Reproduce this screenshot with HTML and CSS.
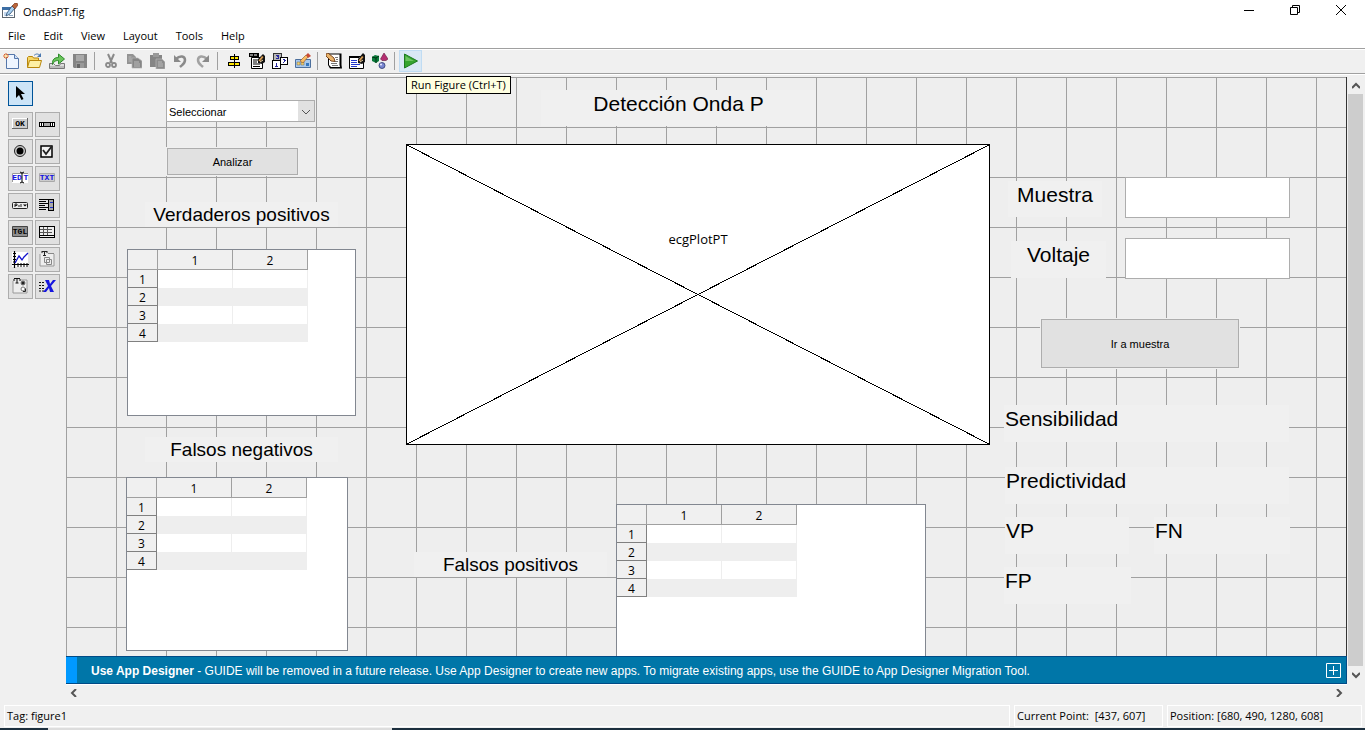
FILE: index.html
```html
<!DOCTYPE html>
<html lang="es">
<head>
<meta charset="utf-8">
<title>OndasPT.fig</title>
<link rel="stylesheet" href="styles.css">
</head>
<body>
<header class="titlebar">
  <svg class="app-icon" viewBox="0 0 16 16"><rect x=".5" y="4.500" width="12" height="10" fill="#fff" stroke="#5d6670"/><rect x="0" y="4" width="10" height="3" fill="#3c6ea5"/><path d="M2 9h3v4H2z" fill="#c4d8ee"/><path d="M7 12.500h4" stroke="#8ba6c0"/><path d="M5 10l5-7 3 2-5 6-4 2z" fill="#a8d0f0" stroke="#2a4a70" stroke-width=".8"/><path d="M10 3l3-3h2l1 2-3 4z" fill="#b9653a" stroke="#6b2c18" stroke-width=".6"/></svg>
  <h1 class="title">OndasPT.fig</h1>
  <div class="window-buttons">
    <button aria-label="Minimize"><svg viewBox="0 0 10 10"><path d="M0 5.500h10" stroke="#000"/></svg></button>
    <button aria-label="Restore"><svg viewBox="0 0 10 10"><path d="M.5 2.500h7v7h-7zM2.500 2.500V.5h7v7h-2" fill="none" stroke="#000"/></svg></button>
    <button aria-label="Close"><svg viewBox="0 0 10 10"><path d="M0 0l10 10M10 0L0 10" stroke="#000"/></svg></button>
  </div>
</header>
<nav class="menubar">
  <button>File</button><button>Edit</button><button>View</button><button>Layout</button><button>Tools</button><button>Help</button>
</nav>
<div class="toolbar" role="toolbar">
  <button aria-label="New"><svg viewBox="0 0 16 16"><path d="M3.500 1.500h8l4 4v10h-12z" fill="#eef5ff" stroke="#5577aa"/><path d="M11.500 1.500v4h4" fill="#cfe0f7" stroke="#5577aa"/><path d="M3 0v6M0 3h6M1 1l4 4M5 1L1 5" stroke="#e0672a"/><rect x="2" y="2" width="2" height="2" fill="#ffe9a0"/></svg></button>
  <button aria-label="Open"><svg viewBox="0 0 16 16"><path d="M1.500 14V4.500l1-1h4l1 1.500h5v9z" fill="#f6d667" stroke="#b8860b"/><path d="M1.500 14.500l2-7h12l-2 7z" fill="#fdf0a5" stroke="#b8860b"/><path d="M8 2.500c2-2 4-2 6 0" fill="none" stroke="#4a78b0"/><path d="M15 0v4h-4z" fill="#4a78b0"/></svg></button>
  <button aria-label="Import"><svg viewBox="0 0 16 16"><path d="M.5 10.500h4l2 2h4l1-2h4v5H.5z" fill="#ddd" stroke="#777"/><path d="M1 14h14" stroke="#999"/><path d="M3.500 11.500C3 6 6 4.500 9.500 4.500V1l6 5-6 5V7.500C7 7.500 5 8 3.500 11.500z" fill="#69c45a" stroke="#2d8a2a"/></svg></button>
  <button aria-label="Save"><svg viewBox="0 0 16 16"><path d="M1 1h14v14H2l-1-1z" fill="#858585"/><path d="M4 2h8v6H4z" fill="#aaa"/><path d="M4 10h8v5H4z" fill="#999"/><path d="M5 11h3v4H5z" fill="#666"/></svg></button>
  <span class="separator"></span>
  <button aria-label="Cut"><svg viewBox="0 0 16 16"><path d="M5 1l4 9M11 1L7 10" stroke="#8a8a8a" stroke-width="2"/><circle cx="5" cy="12" r="2" fill="none" stroke="#8a8a8a" stroke-width="1.800"/><circle cx="11" cy="12" r="2" fill="none" stroke="#8a8a8a" stroke-width="1.800"/></svg></button>
  <button aria-label="Copy"><svg viewBox="0 0 16 16"><path d="M1 1h6l3 3v7H1z" fill="#939393"/><path d="M6 5h6l4 3v7H6z" fill="#858585" stroke="#b8b8b8" stroke-width=".7"/><path d="M2.500 4h3M2.500 6h3M2.500 8h3M8 9h5M8 11h6M8 13h6" stroke="#bbb"/></svg></button>
  <button aria-label="Paste"><svg viewBox="0 0 16 16"><path d="M1 2h12v12H1z" fill="#858585"/><path d="M4 0h6v4H4z" fill="#9a9a9a"/><path d="M7 6h6l3 3v7H7z" fill="#8c8c8c" stroke="#b8b8b8" stroke-width=".7"/><path d="M9 9h4M9 11h5M9 13h5" stroke="#bbb"/></svg></button>
  <button aria-label="Undo"><svg viewBox="0 0 16 16"><path d="M4 6c4-4 9-3 9 1s-3 5-5 7" fill="none" stroke="#8a8a8a" stroke-width="2.500"/><path d="M2 2v7h7z" fill="#8a8a8a"/></svg></button>
  <button aria-label="Redo"><svg viewBox="0 0 16 16"><path d="M12 6C8 2 3 3 3 7s3 5 5 7" fill="none" stroke="#a2a2a2" stroke-width="2.500"/><path d="M14 2v7H7z" fill="#8a8a8a"/></svg></button>
  <span class="separator"></span>
  <button aria-label="Align Objects"><svg viewBox="0 0 16 16" class="crisp"><path d="M8 1h1v14H8z"/><path d="M4.500 3.500h8v3h-8zM2.500 9.500h11v3h-11z" fill="#ffe600" stroke="#000"/><path d="M8 4h1v2H8zM8 10h1v2H8z"/></svg></button>
  <button aria-label="Menu Editor"><svg viewBox="0 0 16 16"><path d="M0 0h10v4H0z"/><path d="M1 2h3M5 2h3" stroke="#fff"/><path d="M2.500 4.500h11v11h-11z" fill="#fff" stroke="#000"/><path d="M4 7h5M4 9h4M4 11h7M4 13.500h7" stroke="#000"/><path d="M9 10V6l5-5 2 2v6l-3 2z" fill="#111"/><path d="M9.500 7.500L13 3l1.500 1-3.500 4.500z" fill="#d79b50"/><path d="M11 9l3-2" stroke="#f3d7a8"/></svg></button>
  <button aria-label="Tab Order Editor"><svg viewBox="0 0 16 16" class="crisp"><path d="M1.500.5h8v7h-8z" fill="#b7b7b7" stroke="#333"/><path d="M8.500 4.500h7v7h-7zM.5 7.500h8v8h-8z" fill="#fff" stroke="#000"/><path d="M4 2h3v4H4V5h2V4H5V3h1H4M11 6h2v1h1v1h-1v1h-1v1h2H11V9h1V7h-1M4 10h1v3h1v1H3v-1h1v-2H3z" fill="#24249c"/></svg></button>
  <button aria-label="Toolbar Editor"><svg viewBox="0 0 16 16"><path d="M.5 6.500h15v8H.5z" fill="#a9c9ec" stroke="#4c6f9c"/><path d="M2 9h3v3H2zM6 9h3v3H6z" fill="#f3d26c" stroke="#666" stroke-width=".5"/><path d="M11 10h3v3h-3z" fill="#3577be"/><path d="M5 8l6-6 2 2-5 6z" fill="#f8bd64" stroke="#884d21" stroke-width=".6"/><path d="M11 2l2-2 3 3-3 2z" fill="#c84b34"/></svg></button>
  <span class="separator"></span>
  <button aria-label="Editor"><svg viewBox="0 0 16 16"><path d="M2 .5h13.500V12l.5 3.500H4L2 12z" fill="#000"/><path d="M3 1.500h10.500V12l.5 2H5l-2-2z" fill="#fff"/><path d="M5 10.500h6M6 12.500h6M9 8.500h3M9 4.500h3M10 6.500h2" stroke="#777"/><path d="M0 1l2-1 6 5 1 3.500L5 8 0 3z" fill="#e8b36a" stroke="#6b3411" stroke-width=".9"/></svg></button>
  <button aria-label="Property Inspector"><svg viewBox="0 0 16 16"><path d="M.5 3.500h14v12H.5z" fill="#fff" stroke="#000"/><path d="M0 3h10v2H0z"/><path d="M2 7.500h6M2 9.500h6M2 11.500h9M2 13.500h6" stroke="#2438cc"/><path d="M9 10V6l5-6 2 2v7l-3 2z" fill="#111"/><path d="M9.500 7.500L13 3l1.500 1-3.500 4.500z" fill="#d79b50"/><path d="M11 9l3-2" stroke="#f3d7a8"/></svg></button>
  <button aria-label="Object Browser"><svg viewBox="0 0 16 16"><path d="M0 4l3-2 4 1v5l-3 2-4-2z" fill="#0a7a3a"/><path d="M0 4l4 1 3-2M4 5v5" stroke="#031" fill="none"/><path d="M12 0l4 6-2 1.500h-4L8.500 6z" fill="#b52e70" stroke="#61183d" stroke-width=".6"/><circle cx="10" cy="12.500" r="3" fill="#7986d1" stroke="#29366f" stroke-width=".8"/><circle cx="9" cy="11.500" r="1" fill="#eef"/></svg></button>
  <span class="separator"></span>
  <button class="run" aria-label="Run Figure"><svg viewBox="0 0 16 16"><path d="M1.500 1L14.500 8l-13 7z" fill="#35a42e" stroke="#1d7b20"/><path d="M2.500 3L11 8H2.500z" fill="#6cc35f"/></svg>
    <span class="tooltip" role="tooltip">Run Figure (Ctrl+T)</span></button>
</div>
<main class="workspace">
  <aside class="palette">
    <button class="selected" aria-label="Select"><svg viewBox="0 0 19 19"><path d="M5 2v12l3-3 2.500 5 2-1-2.500-5h4z"/></svg></button>
    <div class="components">
      <button aria-label="Push Button"><svg viewBox="0 0 19 19"><path d="M1 3h16v11H1z" fill="#666"/><path d="M1 3h15v10H1z" fill="#fff"/><path d="M2 4h14v9H2z" fill="#ccc"/><text x="9" y="11" class="tiny">OK</text></svg></button>
      <button aria-label="Slider"><svg viewBox="0 0 19 19" class="crisp"><path d="M1 7h16v5H1z"/><path d="M2 8h3v3H2zM13 8h3v3h-3z" fill="#fff"/><path d="M6 8h6v3H6z" fill="#aaa"/><path d="M3 8h1v3H3zM14 8h1v3h-1z"/></svg></button>
      <button aria-label="Radio Button"><svg viewBox="0 0 19 19"><circle cx="9" cy="9" r="5.500" fill="#ccc" stroke="#222"/><circle cx="9" cy="9" r="3.500"/></svg></button>
      <button aria-label="Check Box"><svg viewBox="0 0 19 19"><path d="M3 4h11v11H3z" fill="#f4f4f4" stroke="#000" stroke-width="1.500"/><path d="M5 8l3 4 6-8" fill="none" stroke="#222" stroke-width="1.800"/></svg></button>
      <button aria-label="Edit Text"><svg viewBox="0 0 19 19"><path d="M1 4h16v10H1z" fill="#fff"/><path d="M1.500 13V4.500H17" stroke="#999" fill="none"/><text x="6" y="11" class="tiny blue">ED</text><text x="15" y="11" class="tiny blue">T</text><path d="M9 3l2 1 2-1M11 4v9M9 14l2-1 2 1" stroke="#000" fill="none"/></svg></button>
      <button aria-label="Static Text"><svg viewBox="0 0 19 19"><path d="M1.500 4.500h15v8h-15z" fill="#ccc" stroke="#aaa"/><text x="9" y="11" class="tiny blue">TXT</text></svg></button>
      <button aria-label="Pop-up Menu"><svg viewBox="0 0 19 19"><rect x="1.500" y="6.500" width="15" height="6" rx="1" fill="#eee" stroke="#222"/><path d="M4 11V8h2v1.500H4M7 10h2M10 8v3" fill="none" stroke="#222"/><path d="M12 8.500h4l-2 2z"/></svg></button>
      <button aria-label="Listbox"><svg viewBox="0 0 19 19" class="crisp"><path d="M1 3h9v1H1zM1 5h7v1H1zM1 7h9v1H1zM1 9h6v1H1zM1 11h9v1H1zM1 13h7v1H1z"/><path d="M10.500 3.500h5v11h-5z" fill="#aaa" stroke="#000"/><path d="M12 6h3v1h-3zM12 11h3v1h-3z" fill="#23c"/></svg></button>
      <button aria-label="Toggle Button"><svg viewBox="0 0 19 19"><path d="M1.500 3.500h15v10h-15z" fill="#8d8d8d" stroke="#444"/><text x="9" y="11" class="tiny">TGL</text></svg></button>
      <button aria-label="Table"><svg viewBox="0 0 19 19" class="crisp"><path d="M1.500 3.500h15v11h-15z" fill="#eee" stroke="#000"/><path d="M2 6h12v1H2zM2 9h12v1H2z" fill="#555"/><path d="M5 4h1v8H5zM9 4h1v8H9z" fill="#555"/><path d="M13 4h1v8H2v1h15v-1h-3V4z"/></svg></button>
      <button aria-label="Axes"><svg viewBox="0 0 19 19"><path d="M1 2h16v15H1z" fill="#fff"/><path d="M3.500 1v17M1 14.500h17" stroke="#000" stroke-width="1.200"/><path d="M2 3.500h3M2 6.500h3M2 9.500h3M2 12h3M7 13v4M10 13v4M13 13v4M16 13v4" stroke="#000"/><path d="M4 13l4-7 3 4 2-3 4-4" fill="none" stroke="#11c" stroke-width="1.300"/></svg></button>
      <button aria-label="Panel"><svg viewBox="0 0 19 19"><path d="M2 4v12h14V4" fill="#eee" stroke="#999"/><path d="M4 1.500h5M6.500 1v5M4 1v2M9 1v2M5 5.500h3" stroke="#222"/><path d="M6.500 7.500h5v5h-5zM8.500 9.500h5v5h-5zM10 3.500h6" fill="none" stroke="#888"/></svg></button>
      <button aria-label="Button Group"><svg viewBox="0 0 19 19"><path d="M2 4v12h14V3h-7" fill="#eee" stroke="#999"/><path d="M3 1.500h6M6 1v5M3 2v2M9 2v2M4.500 6h3" stroke="#111"/><circle cx="12" cy="6" r="2" fill="#222" stroke="#777"/><circle cx="12" cy="12" r="2" fill="#fff" stroke="#777"/><path d="M12 14.500h2.500v-3" fill="none" stroke="#222"/></svg></button>
      <button aria-label="ActiveX Control"><svg viewBox="0 0 19 19"><path d="M1 5.500h6M1 8.500h6M1 11.500h6M1 14h5" stroke="#111" stroke-dasharray="2 1"/><path d="M7 3h4l1 4 3-4h3l-5 6 3 6h-4l-1-4-3 4H5l5-6z" fill="#1515df"/></svg></button>
    </div>
  </aside>
  <section class="stage">
    <div class="canvas">
      <select class="widget popup" aria-label="Seleccionar"><option>Seleccionar</option></select>
      <svg class="widget chevron" viewBox="0 0 10 6"><path d="M1 1l4 4 4-4" fill="none" stroke="#555"/></svg>
      <button class="widget push analyze">Analizar</button>
      <div class="widget caption main-caption">Detección Onda P</div>
      <div class="widget axes"><svg viewBox="0 0 100 100" preserveAspectRatio="none"><path d="M0 0L100 100M100 0L0 100" stroke="#000" vector-effect="non-scaling-stroke" shape-rendering="crispEdges"/></svg><span>ecgPlotPT</span></div>
      <div class="widget caption list-caption true-positive">Verdaderos positivos</div>
      <div class="widget uitable table-tp"><table><thead><tr><th></th><th>1</th><th>2</th></tr></thead><tbody><tr><th>1</th><td></td><td></td></tr><tr><th>2</th><td></td><td></td></tr><tr><th>3</th><td></td><td></td></tr><tr><th>4</th><td></td><td></td></tr></tbody></table></div>
      <div class="widget caption list-caption false-negative">Falsos negativos</div>
      <div class="widget uitable table-fn"><table><thead><tr><th></th><th>1</th><th>2</th></tr></thead><tbody><tr><th>1</th><td></td><td></td></tr><tr><th>2</th><td></td><td></td></tr><tr><th>3</th><td></td><td></td></tr><tr><th>4</th><td></td><td></td></tr></tbody></table></div>
      <div class="widget caption list-caption false-positive">Falsos positivos</div>
      <div class="widget uitable table-fp"><table><thead><tr><th></th><th>1</th><th>2</th></tr></thead><tbody><tr><th>1</th><td></td><td></td></tr><tr><th>2</th><td></td><td></td></tr><tr><th>3</th><td></td><td></td></tr><tr><th>4</th><td></td><td></td></tr></tbody></table></div>
      <label class="widget caption sample-label" for="muestra">Muestra</label>
      <input class="widget edit sample-edit" id="muestra" type="text">
      <label class="widget caption voltage-label" for="voltaje">Voltaje</label>
      <input class="widget edit voltage-edit" id="voltaje" type="text">
      <button class="widget push go-sample">Ir a muestra</button>
      <div class="widget caption result sensitivity">Sensibilidad</div>
      <div class="widget caption result predictivity">Predictividad</div>
      <div class="widget caption result vp">VP</div>
      <div class="widget caption result fn">FN</div>
      <div class="widget caption result fp">FP</div>
    </div>
    <div class="banner">
      <p><b>Use App Designer</b> - GUIDE will be removed in a future release. Use App Designer to create new apps. To migrate existing apps, use the GUIDE to App Designer Migration Tool.</p>
      <button aria-label="Expand"><svg viewBox="0 0 15 15"><path d="M.5.5h14v14H.5zM7.500 3v9M3 7.500h9" fill="none" stroke="#fff"/></svg></button>
    </div>
    <div class="hscroll">
      <button aria-label="Scroll left"><svg viewBox="0 0 8 8"><path d="M6 0L2 4l4 4" fill="none" stroke="#555" stroke-width="2"/></svg></button>
      <button aria-label="Scroll right"><svg viewBox="0 0 8 8"><path d="M2 0l4 4-4 4" fill="none" stroke="#555" stroke-width="2"/></svg></button>
    </div>
  </section>
  <div class="vscroll">
    <button aria-label="Scroll up"><svg viewBox="0 0 8 8"><path d="M0 6l4-4 4 4" fill="none" stroke="#555" stroke-width="2"/></svg></button>
    <div class="thumb"></div>
    <button aria-label="Scroll down"><svg viewBox="0 0 8 8"><path d="M0 2l4 4 4-4" fill="none" stroke="#555" stroke-width="2"/></svg></button>
  </div>
</main>
<footer class="statusbar">
  <div class="tag">Tag: figure1</div>
  <div class="point">Current Point:&nbsp; [437, 607]</div>
  <div class="position">Position: [680, 490, 1280, 608]</div>
</footer>
<div class="desktop-edge"><span></span></div>
</body>
</html>
```
FILE: styles.css
```css
* { box-sizing: border-box; }
body {
  margin: 0;
  min-height: 100vh;
  display: flex;
  flex-direction: column;
  background: #f0f0f0;
  color: #000;
  font: 11px/16px "Open Sans", "Noto Sans", sans-serif;
}
button { margin: 0; padding: 0; border: 0; background: none; font: inherit; color: inherit; }
svg { display: block; }
.crisp { shape-rendering: crispEdges; }

.titlebar { display: flex; height: 24px; padding-left: 2px; background: #fff; }
.app-icon { width: 16px; height: 16px; margin-top: 3px; }
.title { flex: 1; margin: 4px 0 0 5px; font-size: 11px; font-weight: 400; }
.window-buttons { display: flex; height: 20px; padding-right: 1px; }
.window-buttons button { width: 46px; display: grid; place-items: center; }
.window-buttons svg { width: 10px; height: 10px; }

.menubar { display: flex; gap: 18px; height: 24px; padding-left: 8px; background: #fff; }
.toolbar {
  display: flex;
  height: 26px;
  border-top: 1px solid #a0a0a0;
  border-bottom: 1px solid #a0a0a0;
  box-shadow: inset 0 1px #fff, 0 1px #fff;
}
.toolbar button { width: 23px; display: grid; place-items: center; position: relative; }
.toolbar button:first-child { width: 22px; }
.toolbar svg { width: 16px; height: 16px; }
.separator { width: 8px; padding: 3px; }
.separator::before { content: ""; display: block; width: 1px; height: 18px; background: #a0a0a0; }
.toolbar .run { margin: 1px 0; background: #d9e8f5; border: 1px solid #c0dcf3; }
.tooltip {
  position: absolute;
  left: 6px;
  top: 25px;
  z-index: 3;
  padding: 0 4px;
  background: #ffffe1;
  border: 1px solid #000;
  white-space: nowrap;
}

.workspace { flex: 1; display: flex; padding-top: 3px; }
.palette { width: 66px; padding: 4px 0 0 8px; }
.palette button { width: 25px; height: 25px; display: grid; place-items: center; background: #e1e1e1; border: 1px solid #adadad; }
.palette svg { width: 19px; height: 19px; }
.palette .selected { background: #cce4f7; border-color: #005499; }
.components { display: grid; grid-template-columns: 25px 25px; gap: 2px; margin-top: 6px; }
.tiny { font: bold 8px "Liberation Mono", monospace; text-anchor: middle; }
.blue { fill: #1111e0; }

.stage { flex: 1; min-width: 0; display: flex; flex-direction: column; }
.canvas {
  flex: 1;
  min-height: 579px;
  position: relative;
  overflow: hidden;
  border-right: 1px solid #333;
  background-color: #eee;
  background-image: linear-gradient(#a0a0a0 1px, transparent 1px), linear-gradient(90deg, #a0a0a0 1px, transparent 1px);
  background-size: 50px 50px;
}
.widget { position: absolute; font-family: "Liberation Sans", Arial, sans-serif; }
.popup { left: 100px; top: 23px; width: 149px; height: 22px; padding: 1px 2px 0; border: 1px solid #adadad; border-radius: 0; appearance: none; background: linear-gradient(#e1e1e1, #e1e1e1) right / 16px 100% no-repeat #fff; font-size: 11px; color: #000; }
.chevron { left: 235px; top: 32px; width: 10px; height: 6px; pointer-events: none; }
.push { background: #e1e1e1; border: 1px solid #adadad; box-shadow: 0 0 0 1px #f0f0f0; font-size: 11px; }
.analyze { left: 101px; top: 71px; width: 131px; height: 27px; }
.go-sample { left: 975px; top: 242px; width: 198px; height: 49px; }
.caption { background: #f0f0f0; font-size: 21px; line-height: 28px; text-align: center; white-space: nowrap; }
.list-caption { width: 193px; height: 25px; font-size: 19px; line-height: 25px; }
.main-caption { left: 475px; top: 13px; width: 275px; height: 36px; }
.true-positive { left: 79px; top: 125px; }
.false-negative { left: 79px; top: 360px; }
.false-positive { left: 348px; top: 475px; }
.axes { left: 340px; top: 67px; width: 584px; height: 301px; background: #fff; border: 1px solid #000; font: 13px/16px "Open Sans", "Noto Sans", sans-serif; text-align: center; padding-top: 86px; }
.axes svg { position: absolute; inset: 0; width: 100%; height: 100%; }
.axes span { position: relative; }

.uitable { background: #fff; border: 1px solid #828790; overflow: hidden; }
.uitable table { border-spacing: 0; table-layout: fixed; width: 180px; font: 12px/15px "Open Sans", "Noto Sans", sans-serif; }
.uitable th, .uitable td { height: 18px; padding: 0; width: 75px; font-weight: 400; border-right: 1px solid #eee; }
.uitable th { padding-top: 2px; background: #f0f0f0; border-right: 1px solid #808080; border-bottom: 1px solid #808080; }
.uitable thead th { height: 20px; border-color: #a0a0a0; }
.uitable th:first-child { width: 30px; }
.uitable tbody tr:nth-child(even) td { background: #eee; }
.table-tp { left: 61px; top: 172px; width: 229px; height: 167px; }
.table-fn { left: 60px; top: 400px; width: 222px; height: 174px; }
.table-fp { left: 550px; top: 427px; width: 310px; height: 174px; }

.sample-label { left: 942px; top: 104px; width: 94px; height: 36px; }
.voltage-label { left: 945px; top: 164px; width: 95px; height: 37px; }
.edit { left: 1059px; width: 165px; height: 41px; padding: 0 4px; border: 1px solid #adadad; background: #fff; font-size: 21px; }
.sample-edit { top: 100px; }
.voltage-edit { top: 161px; }
.result { height: 37px; padding-left: 1px; text-align: left; }
.sensitivity { left: 938px; top: 328px; width: 285px; }
.predictivity { left: 939px; top: 390px; width: 284px; }
.vp { left: 939px; top: 440px; width: 124px; }
.fn { left: 1088px; top: 440px; width: 136px; }
.fp { left: 938px; top: 490px; width: 127px; }

.banner {
  display: flex;
  align-items: center;
  justify-content: space-between;
  height: 28px;
  padding: 0 5px 0 13px;
  border: 1px solid #004b87;
  border-left: 0;
  background: linear-gradient(#0099ff, #0099ff) left / 11px 100% no-repeat #0076a8;
  color: #fff;
  font: 12px/16px "Liberation Sans", Arial, sans-serif;
}
.banner p { margin: 0; padding: 2px 0 0 12px; }
.banner svg { width: 15px; height: 15px; }
.hscroll { display: flex; justify-content: space-between; height: 21px; padding: 3px; border-top: 1px solid #fff; }
.hscroll svg, .vscroll svg { width: 8px; height: 8px; }
.hscroll button { width: 10px; height: 9px; display: grid; place-items: center; }
.vscroll { display: flex; flex-direction: column; width: 18px; padding: 0 2px 22px 1px; }
.vscroll button { height: 17px; display: grid; place-items: center; }
.thumb { flex: 1; background: #cdcdcd; }

.statusbar { display: flex; gap: 4px; height: 22px; padding: 0 3px 0 4px; }
.statusbar div { border: 1px solid #fff; padding: 2px; white-space: pre; }
.tag { flex: 1; }
.point { width: 149px; }
.position { width: 195px; }
.desktop-edge { height: 2px; margin-top: 1px; padding-left: 48px; background: #1c2f3e; }
.desktop-edge span { display: block; width: 344px; height: 2px; background: #ddd; }
```
